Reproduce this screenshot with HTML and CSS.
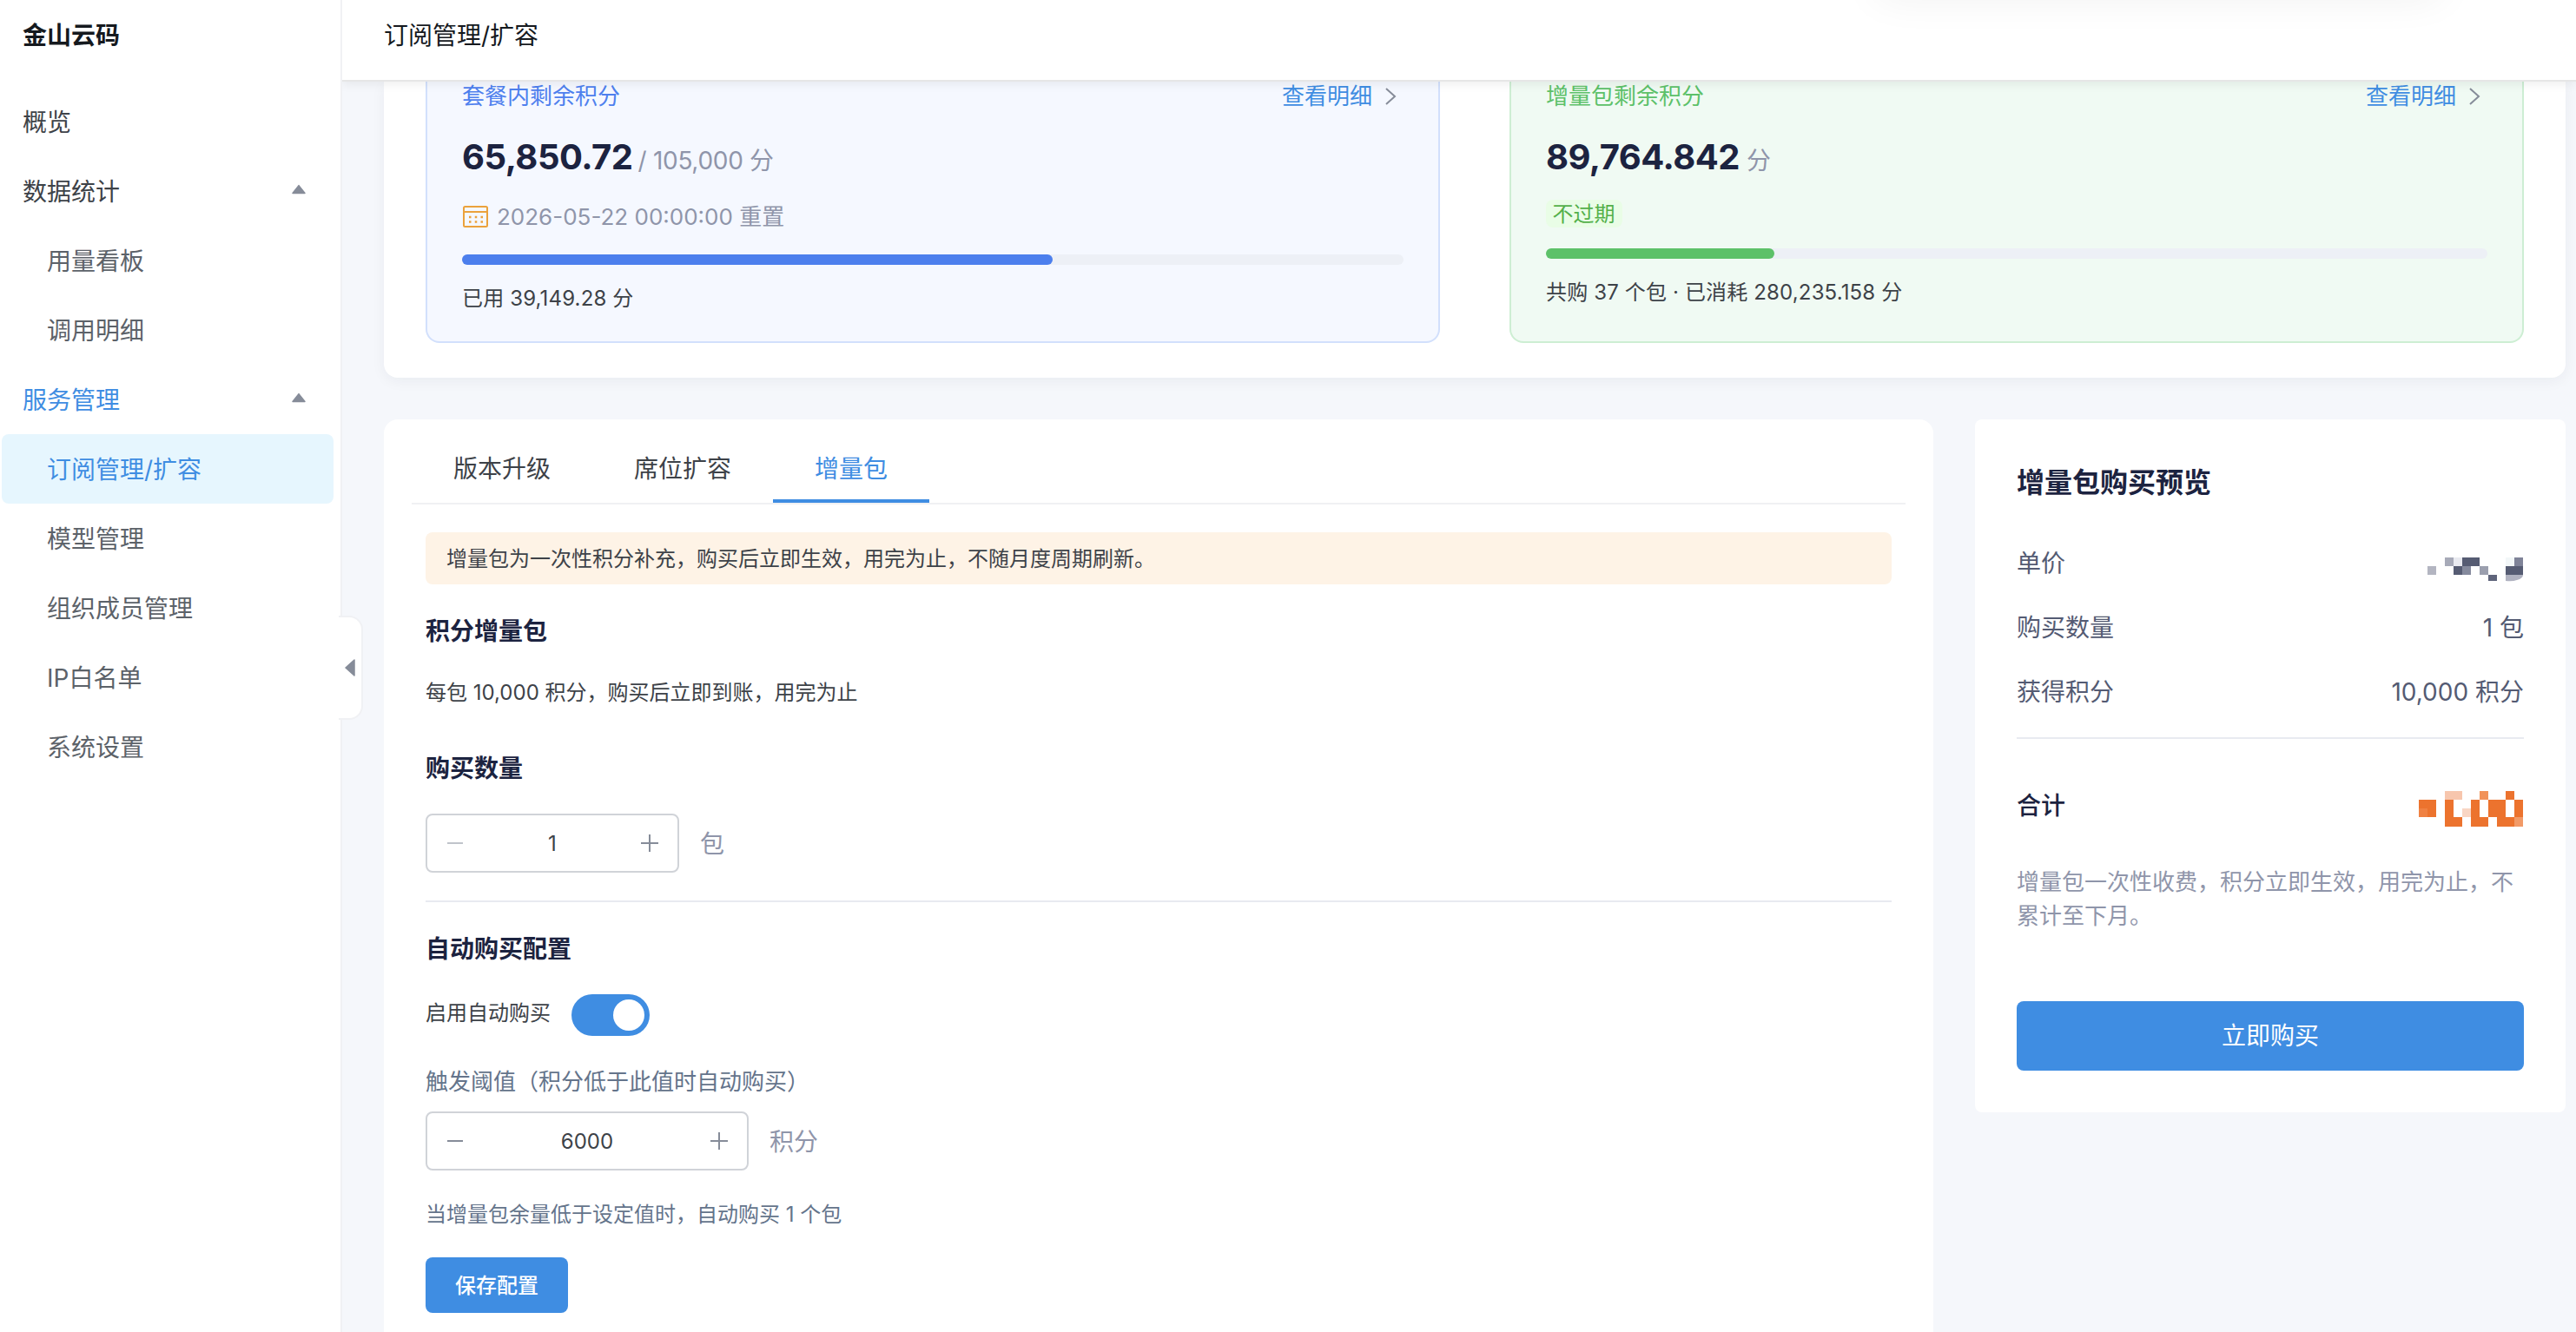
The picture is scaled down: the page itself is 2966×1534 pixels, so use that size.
FILE: index.html
```html
<!DOCTYPE html>
<html lang="zh-CN">
<head>
    <meta charset="UTF-8">
    <meta name="viewport" content="width=device-width, initial-scale=1.0">
    <title>订阅管理/扩容 - 金山云码</title>
    <link rel="stylesheet" href="styles.css">
</head>
<body>
    <div class="layout">
        <aside class="sidebar">
            <div class="brand">金山云码</div>
            <nav class="menu">
                <a class="menu-item">概览</a>
                <a class="menu-item">数据统计
                    <svg class="caret" width="18" height="12" viewBox="0 0 18 12"><path d="M9 1.6 L16 10.4 H2 Z" /></svg>
                </a>
                <a class="menu-item sub">用量看板</a>
                <a class="menu-item sub">调用明细</a>
                <a class="menu-item open">服务管理
                    <svg class="caret" width="18" height="12" viewBox="0 0 18 12"><path d="M9 1.6 L16 10.4 H2 Z" /></svg>
                </a>
                <a class="menu-item sub active">订阅管理/扩容</a>
                <a class="menu-item sub">模型管理</a>
                <a class="menu-item sub">组织成员管理</a>
                <a class="menu-item sub">IP白名单</a>
                <a class="menu-item sub">系统设置</a>
            </nav>
            <button type="button" class="collapse">
                <svg width="14" height="22" viewBox="0 0 14 22"><path d="M2 11 L12 2 V20 Z" /></svg>
            </button>
        </aside>

        <div class="main">
            <header class="header">
                <h1>订阅管理/扩容</h1>
                <div class="header-shade"></div>
            </header>

            <div class="content">
                <section class="overview">
                    <div class="quota blue">
                        <div class="quota-head">
                            <span class="quota-title">套餐内剩余积分</span>
                            <a class="detail">查看明细
                                <svg width="14" height="22" viewBox="0 0 14 22"><path d="M2 2 L12 11 L2 20" /></svg>
                            </a>
                        </div>
                        <div class="quota-value"><strong>65,850.72</strong><span>/ 105,000 分</span></div>
                        <div class="quota-date">
                            <svg width="30" height="26" viewBox="0 0 30 26">
                                <rect x="2" y="1" width="27" height="23" rx="1.5" />
                                <path d="M2 7 H29" />
                                <path class="dots" d="M8 13 H24 M8 18.5 H24" />
                            </svg>
                            <span>2026-05-22 00:00:00 重置</span>
                        </div>
                        <div class="progress"><div class="bar" style="width: 62.72%"></div></div>
                        <div class="quota-foot">已用 39,149.28 分</div>
                    </div>
                    <div class="quota green">
                        <div class="quota-head">
                            <span class="quota-title">增量包剩余积分</span>
                            <a class="detail">查看明细
                                <svg width="14" height="22" viewBox="0 0 14 22"><path d="M2 2 L12 11 L2 20" /></svg>
                            </a>
                        </div>
                        <div class="quota-value"><strong>89,764.842</strong><span>分</span></div>
                        <div class="tag">不过期</div>
                        <div class="progress"><div class="bar" style="width: 24.26%"></div></div>
                        <div class="quota-foot">共购 37 个包 · 已消耗 280,235.158 分</div>
                    </div>
                </section>

                <div class="columns">
                    <section class="panel">
                        <div class="tabs">
                            <a class="tab">版本升级</a>
                            <a class="tab">席位扩容</a>
                            <a class="tab active">增量包</a>
                        </div>
                        <div class="panel-body">
                            <div class="notice">增量包为一次性积分补充，购买后立即生效，用完为止，不随月度周期刷新。</div>
                            <h2>积分增量包</h2>
                            <p class="desc">每包 10,000 积分，购买后立即到账，用完为止</p>
                            <h2>购买数量</h2>
                            <div class="field">
                                <div class="stepper">
                                    <svg class="disabled" width="20" height="20" viewBox="0 0 20 20"><path d="M1 10 H19" /></svg>
                                    <span>1</span>
                                    <svg width="20" height="20" viewBox="0 0 20 20"><path d="M0 10 H20 M10 0 V20" /></svg>
                                </div>
                                <span class="unit">包</span>
                            </div>
                            <hr>
                            <h2>自动购买配置</h2>
                            <div class="switch-row">
                                <span>启用自动购买</span>
                                <div class="switch"><i></i></div>
                            </div>
                            <label class="threshold">触发阈值（积分低于此值时自动购买）</label>
                            <div class="field">
                                <div class="stepper wide">
                                    <svg width="20" height="20" viewBox="0 0 20 20"><path d="M1 10 H19" /></svg>
                                    <span>6000</span>
                                    <svg width="20" height="20" viewBox="0 0 20 20"><path d="M0 10 H20 M10 0 V20" /></svg>
                                </div>
                                <span class="unit">积分</span>
                            </div>
                            <p class="hint">当增量包余量低于设定值时，自动购买 1 个包</p>
                            <button type="button" class="btn save">保存配置</button>
                        </div>
                    </section>

                    <aside class="preview">
                        <h3>增量包购买预览</h3>
                        <div class="row">
                            <span>单价</span>
                            <svg class="mask" width="110" height="28" viewBox="0 0 110 28" shape-rendering="crispEdges">
                                <path fill="#565c73" d="M40 0h20v10h-20z M30 10h10v10h-10z M90 10h20v10h-20z" />
                                <path fill="#5f647b" d="M70 20h10v7h-10z" />
                                <path fill="#a7aab8" d="M20 0h10v10h-10z" />
                                <path fill="#e9eaf0" d="M30 0h10v10h-10z" />
                                <path fill="#f3f7f8" d="M90 0h10v10h-10z" />
                                <path fill="#7f8398" d="M100 0h10v10h-10z" />
                                <path fill="#b3b5c1" d="M0 10h10v10h-10z" />
                                <path fill="#858a9d" d="M40 10h10v10h-10z" />
                                <path fill="#9b9fae" d="M60 10h10v10h-10z" />
                                <path fill="#b0b2c0" shape-rendering="auto" d="M90 20h20q0 4 -7 6q-5 2 -13 1z" />
                            </svg>
                        </div>
                        <div class="row"><span>购买数量</span><span>1 包</span></div>
                        <div class="row"><span>获得积分</span><span>10,000 积分</span></div>
                        <hr>
                        <div class="row total">
                            <span>合计</span>
                            <svg class="mask" width="120" height="41" viewBox="0 0 120 41" shape-rendering="crispEdges">
                                <path fill="#ec732e" d="M100 0h10v10h-10z M0 10h20v20h-20z M30 10h10v31h-10z M40 30h10v11h-10z M60 10h10v31h-10z M70 30h10v11h-10z M80 10h20v20h-20z M90 30h20v11h-20z M110 10h10v20h-10z" />
                                <path fill="#f08142" d="M0 20h10v10h-10z" />
                                <path fill="#f7c6ad" d="M30 0h20v10h-20z" />
                                <path fill="#f19259" d="M70 0h10v10h-10z" />
                                <path fill="#f9d6c4" d="M50 20h10v10h-10z" />
                                <path fill="#f29a67" d="M110 30h10v11h-10z" />
                            </svg>
                        </div>
                        <p class="note">增量包一次性收费，积分立即生效，用完为止，不累计至下月。</p>
                        <button type="button" class="btn buy">立即购买</button>
                    </aside>
                </div>
            </div>
        </div>
    </div>
</body>
</html>
```

FILE: styles.css
```css
* {
    box-sizing: border-box;
}

body {
    margin: 0;
    font-family: Inter, "Noto Sans CJK SC", sans-serif;
    font-size: 28px;
    line-height: 1.4;
    color: #3d4248;
    background-color: #f5f7fb;
}

h1, h2, h3, p {
    margin: 0;
}

button {
    font-family: inherit;
    border: none;
    padding: 0;
}

hr {
    border: 0;
    height: 2px;
    margin: 0;
    background: #e8eaf0;
}

svg {
    flex: none;
}

.layout {
    display: flex;
    height: 1534px;
    overflow: hidden;
}

/* sidebar */
.sidebar {
    position: relative;
    z-index: 3;
    width: 394px;
    flex: none;
    background: #fff;
    border-right: 2px solid #f0f1f4;
}

.brand {
    height: 100px;
    padding: 21px 26px;
    line-height: 40px;
    font-weight: 600;
    color: #15191e;
}

.menu-item {
    display: flex;
    align-items: center;
    justify-content: space-between;
    height: 80px;
    margin: 0 8px 0 2px;
    padding: 3px 31px 0 24px;
    border-radius: 8px;
    color: #3d4248;
}

.menu-item.sub {
    padding-left: 52px;
    color: #5c6269;
}

.menu-item.open {
    color: #3f8de2;
}

.menu-item.active {
    background: #e6f6fe;
    color: #3f8de2;
}

.caret {
    margin-top: -7px;
}

.caret path, .collapse path {
    fill: #868c99;
    stroke: #868c99;
    stroke-width: 1.5;
    stroke-linejoin: round;
}

.collapse {
    position: absolute;
    top: 709px;
    right: -26px;
    width: 28px;
    height: 120px;
    display: flex;
    align-items: center;
    padding-left: 6px;
    background: #fff;
    border: 2px solid #f0f1f4;
    border-left: none;
    border-radius: 0 16px 16px 0;
}

/* header */
.main {
    flex: 1;
    min-width: 0;
    display: flex;
    flex-direction: column;
}

.header {
    position: relative;
    z-index: 2;
    height: 94px;
    flex: none;
    padding: 21px 48px;
    background: #fff;
    border-bottom: 2px solid #e6e6e6;
    box-shadow: 0 2px 12px rgba(0, 0, 0, 0.08);
}

.header h1 {
    font-size: 28px;
    line-height: 40px;
    font-weight: 400;
    color: #15191e;
}

.header-shade {
    position: absolute;
    top: -46px;
    right: 154px;
    width: 652px;
    height: 36px;
    border-radius: 12px;
    box-shadow: 0 6px 48px rgba(0, 0, 0, 0.07);
}

.content {
    padding: 0 12px 0 48px;
}

/* quota cards */
.overview {
    display: grid;
    grid-template-columns: 1fr 1fr;
    gap: 80px;
    height: 341px;
    padding: 0 48px 40px;
    background: #fff;
    border-radius: 0 0 16px 16px;
    box-shadow: 0 4px 16px rgba(20, 30, 60, 0.05);
}

.quota {
    padding: 0 40px;
    border: 2px solid;
    border-top: none;
    border-radius: 0 0 16px 16px;
}

.quota.blue {
    background: #f5f8ff;
    border-color: #d2e0fc;
}

.quota.green {
    background: #f0faf3;
    border-color: #cdeed3;
}

.quota-head {
    display: flex;
    justify-content: space-between;
    align-items: center;
    height: 34px;
    font-size: 26px;
}

.blue .quota-title {
    color: #4e80ee;
}

.green .quota-title {
    color: #5dc169;
}

.detail {
    display: flex;
    align-items: center;
    gap: 14px;
    padding-right: 8px;
    color: #3f8de2;
}

.detail path {
    fill: none;
    stroke: #868c99;
    stroke-width: 2;
}

.quota-value {
    display: flex;
    align-items: baseline;
    height: 60px;
    margin-top: 23px;
    line-height: 60px;
}

.quota-value strong {
    font-size: 40px;
    font-weight: 700;
    letter-spacing: -0.5px;
    color: #1c2340;
}

.quota-value span {
    margin-left: 8px;
    letter-spacing: -0.3px;
    color: #8f95aa;
}

.blue .quota-value span {
    margin-left: 6px;
}

.quota-date {
    display: flex;
    align-items: center;
    gap: 10px;
    height: 40px;
    margin-top: 19px;
    font-size: 26px;
    color: #8f95aa;
}

.quota-date svg {
    fill: none;
    stroke: #eba23c;
    stroke-width: 2;
}

.quota-date .dots {
    stroke-width: 2.5;
    stroke-dasharray: 2.5 4.25;
}

.tag {
    width: 88px;
    height: 32px;
    margin-top: 19px;
    padding-right: 1px;
    text-align: center;
    line-height: 34px;
    font-size: 24px;
    color: #54b04a;
    background: #e9fde6;
    border-radius: 8px;
}

.progress {
    height: 12px;
    margin-top: 23px;
    border-radius: 6px;
    background: #edf0f6;
}

.green .progress {
    margin-top: 24px;
}

.bar {
    height: 100%;
    border-radius: 6px;
}

.blue .bar {
    background: #4c7fed;
}

.green .bar {
    background: #5dc169;
}

.quota-foot {
    margin-top: 21px;
    line-height: 36px;
    font-size: 24px;
    letter-spacing: 0.15px;
}

/* lower area */
.columns {
    display: flex;
    align-items: flex-start;
    gap: 48px;
    margin-top: 48px;
}

.panel {
    flex: 1;
    height: 1200px;
    background: #fff;
    border-radius: 16px;
}

.tabs {
    display: flex;
    height: 98px;
    margin: 0 32px;
    padding-top: 16px;
    border-bottom: 2px solid #f0f1f3;
}

.tab {
    padding: 0 48px;
    line-height: 82px;
}

.tab.active {
    height: 80px;
    color: #3f8de2;
    border-bottom: 4px solid #3f8de2;
}

.panel-body {
    padding: 32px 48px;
}

.notice {
    height: 60px;
    padding: 0 24px;
    line-height: 62px;
    font-size: 24px;
    background: #fef3e6;
    border-radius: 8px;
}

.panel h2 {
    height: 40px;
    margin-top: 33px;
    font-size: 28px;
    line-height: 42px;
    font-weight: 600;
    color: #1c2340;
}

.desc {
    margin-top: 34px;
    line-height: 36px;
    font-size: 24px;
}

.panel .desc + h2 {
    margin-top: 48px;
}

.field {
    display: flex;
    align-items: center;
    gap: 24px;
    margin-top: 33px;
    margin-bottom: 32px;
}

.stepper {
    display: flex;
    align-items: center;
    justify-content: space-between;
    width: 292px;
    height: 68px;
    padding: 0 22px;
    font-size: 24px;
    border: 2px solid #d0d3d8;
    border-radius: 8px;
}

.stepper.wide {
    width: 372px;
}

.stepper span {
    padding-top: 1px;
}

.stepper path {
    stroke: #868c99;
    stroke-width: 2;
}

.stepper .disabled path {
    stroke: #c0c4cb;
}

.unit {
    padding-top: 3px;
    color: #8f95aa;
}

.switch-row {
    display: flex;
    gap: 24px;
    height: 48px;
    margin-top: 33px;
    line-height: 44px;
    font-size: 24px;
}

.switch {
    width: 90px;
    height: 48px;
    padding: 6px;
    background: #3f8de2;
    border-radius: 24px;
}

.switch i {
    display: block;
    width: 36px;
    height: 36px;
    margin-left: auto;
    background: #fff;
    border-radius: 50%;
}

.threshold {
    display: block;
    height: 40px;
    margin-top: 32px;
    line-height: 42px;
    font-size: 26px;
    color: #64748b;
}

.threshold + .field {
    margin-top: 15px;
}

.hint {
    line-height: 37px;
    font-size: 24px;
    color: #64748b;
}

.btn {
    display: flex;
    align-items: center;
    justify-content: center;
    padding-top: 2px;
    line-height: 1.4;
    color: #fff;
    background: #3f8de2;
    border-radius: 8px;
}

.save {
    width: 164px;
    height: 64px;
    margin-top: 31px;
    font-size: 24px;
    font-weight: 500;
}

/* preview card */
.preview {
    width: 680px;
    height: 798px;
    padding: 49px 48px 48px;
    background: #fff;
    border-radius: 8px;
}

.preview h3 {
    margin-bottom: 47px;
    line-height: 48px;
    font-size: 32px;
    font-weight: 600;
    color: #1c2340;
}

.row {
    display: flex;
    justify-content: space-between;
    height: 42px;
    margin-bottom: 32px;
    line-height: 44px;
    color: #545b73;
}

.mask {
    margin: 15px 1px 0 0;
}

.total {
    margin-top: 55px;
    margin-bottom: 48px;
    font-weight: 500;
    color: #1c2340;
}

.total .mask {
    margin-top: 5px;
}

.note {
    line-height: 39px;
    font-size: 26px;
    color: #8f95aa;
}

.buy {
    width: 100%;
    height: 80px;
    margin-top: 79px;
    font-size: 28px;
}
```
